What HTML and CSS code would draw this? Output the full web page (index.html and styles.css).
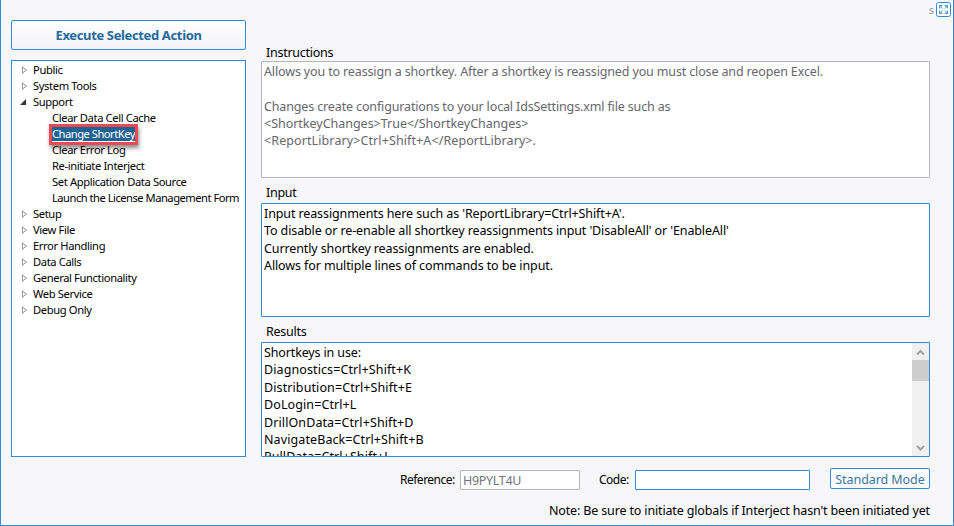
FILE: index.html
```html
<!DOCTYPE html>
<html lang="en">
<head>
<meta charset="utf-8">
<title>System Actions</title>
<link rel="stylesheet" href="styles.css">
</head>
<body>
<div class="window">
  <div class="corner">
    <span>s</span>
    <svg class="expand" viewBox="0 0 15 15">
      <rect x=".5" y=".5" width="14" height="14" rx="2" fill="#fff" stroke="#2f8bd8"/>
      <path d="M3 3h4L3 7zM12 3v4L8 3zM3 12V8L7 12zM12 12H8L12 8z" fill="#5b9fd0"/>
      <path d="M4 4l2.500 2.500M11 4L8.500 6.500M4 11l2.500-2.500M11 11L8.500 8.500" stroke="#7db3da"/>
    </svg>
  </div>
  <aside class="side">
    <button class="execute">Execute Selected Action</button>
    <ul class="tree">
      <li><i class="closed"></i><span>Public</span></li>
      <li><i class="closed"></i><span>System Tools</span></li>
      <li><i class="open"></i><span>Support</span></li>
      <li class="child"><span>Clear Data Cell Cache</span></li>
      <li class="child"><span class="selected">Change ShortKey</span></li>
      <li class="child"><span>Clear Error Log</span></li>
      <li class="child"><span>Re-initiate Interject</span></li>
      <li class="child"><span>Set Application Data Source</span></li>
      <li class="child long"><span>Launch the License Management Form</span></li>
      <li><i class="closed"></i><span>Setup</span></li>
      <li><i class="closed"></i><span>View File</span></li>
      <li><i class="closed"></i><span>Error Handling</span></li>
      <li><i class="closed"></i><span>Data Calls</span></li>
      <li><i class="closed"></i><span>General Functionality</span></li>
      <li><i class="closed"></i><span>Web Service</span></li>
      <li><i class="closed"></i><span>Debug Only</span></li>
    </ul>
  </aside>
  <main class="main">
    <h2>Instructions</h2>
    <div class="box instructions">Allows you to reassign a shortkey. After a shortkey is reassigned you must close and reopen Excel.

Changes create configurations to your local IdsSettings.xml file such as
<span class="tag">&lt;ShortkeyChanges&gt;True&lt;/ShortkeyChanges&gt;</span>
<span class="keys">&lt;ReportLibrary&gt;Ctrl+Shift+A&lt;/ReportLibrary&gt;.</span></div>
    <h2>Input</h2>
    <div class="box input">Input reassignments here such as 'ReportLibrary=Ctrl+Shift+A'.
To disable or re-enable all shortkey reassignments input 'DisableAll' or 'EnableAll'
Currently shortkey reassignments are enabled.
Allows for multiple lines of commands to be input.</div>
    <h2>Results</h2>
    <div class="box results">
      <div class="lines">Shortkeys in use:
<span class="keys">Diagnostics=Ctrl+Shift+K
Distribution=Ctrl+Shift+E
DoLogin=Ctrl+L
DrillOnData=Ctrl+Shift+D
NavigateBack=Ctrl+Shift+B
PullData=Ctrl+Shift+J</span></div>
      <div class="scrollbar">
        <svg viewBox="0 0 17 17"><path d="M5 11.500L8.500 8l3.500 3.500" /></svg>
        <div class="thumb"></div>
        <svg class="down" viewBox="0 0 17 17"><path d="M5 7L8.500 10.500 12 7" /></svg>
      </div>
    </div>
    <div class="fields">
      <label class="ref-label">Reference:</label><div class="field ref">H9PYLT4U</div>
      <label class="code-label">Code:</label><div class="field code"></div>
      <button class="mode">Standard Mode</button>
    </div>
    <p class="note">Note: Be sure to initiate globals if Interject hasn't been initiated yet</p>
  </main>
</div>
</body>
</html>
```
FILE: styles.css
```css
* { box-sizing: border-box; }
body {
  margin: 0;
  font-family: "Noto Sans", "Open Sans", sans-serif;
  font-size: 12.5px;
  letter-spacing: -0.14px;
  color: #000;
}
.window {
  position: relative;
  display: flex;
  gap: 15px;
  width: 954px;
  height: 526px;
  padding: 0 23px 0 10px;
  background: #f7f7fa;
  border: solid #338bd8;
  border-width: 0 1px 1px;
}
.corner {
  position: absolute;
  top: 2px;
  right: 2px;
  display: flex;
  gap: 2px;
  color: #9a9a9a;
  font-size: 11px;
  line-height: 15px;
}
.expand { width: 15px; height: 15px; }
.side { width: 235px; padding-top: 20px; }
button {
  display: block;
  padding: 0;
  font-family: inherit;
  color: #24699b;
  border: 1px solid #338bd8;
  border-radius: 2px;
}
.execute {
  width: 235px;
  height: 30px;
  font-size: 13px;
  font-weight: 700;
  letter-spacing: -0.36px;
  background: linear-gradient(#fff, #f3f3f7);
}
.tree {
  height: 397px;
  margin: 10px 0 0;
  padding: 1px 0 0 9px;
  list-style: none;
  background: #fff;
  border: 1px solid #338bd8;
  font-size: 11.2px;
  line-height: 16px;
  letter-spacing: -0.38px;
}
.tree li { display: flex; height: 16px; white-space: nowrap; }
.tree i { width: 12px; height: 16px; }
.tree i::before { content: ""; display: block; }
.closed::before {
  width: 5px;
  height: 8px;
  margin: 4px 0 0 1px;
  background: #999;
  clip-path: polygon(0 0, 100% 50%, 0 100%, 0 0, 1px 2px, 1px 6px, 3.500px 4px, 1px 2px);
}
.open::before {
  width: 6px;
  height: 6px;
  margin: 5px 0 0 -1px;
  background: #333;
  clip-path: polygon(100% 0, 100% 100%, 0 100%);
}
.tree .child { padding-left: 31px; }
.tree .long { letter-spacing: -0.51px; }
.selected {
  position: relative;
  height: 15px;
  color: #fff;
  background: #1f6396;
  letter-spacing: -0.5px;
}
.selected::after {
  content: "";
  position: absolute;
  inset: -2px -3px -4px;
  border: 3px solid #ee4850;
  box-shadow: 1px 3px 4px rgba(0, 0, 0, .45);
}
.main { width: 669px; padding-top: 44px; }
h2 {
  height: 17px;
  margin: 0;
  padding-left: 5px;
  font-size: 12.5px;
  font-weight: 400;
  line-height: 17px;
  letter-spacing: -0.26px;
}
.box {
  padding: 1px 0 0 2px;
  overflow: hidden;
  background: #fff;
  border: 1px solid #338bd8;
  border-radius: 1px;
  line-height: 17.300px;
  white-space: pre;
}
.keys { letter-spacing: 0.1px; }
.tag { letter-spacing: -0.02px; }
.instructions { height: 117px; margin-bottom: 6px; color: #66666d; border-color: #b4b6bd; }
.input { height: 114px; margin: 2px 0 6px; letter-spacing: -0.11px; }
.results { display: flex; height: 115px; margin-top: 2px; padding-top: 0; }
.lines { flex: 1; height: 113px; padding-top: 1px; overflow: hidden; line-height: 17.400px; }
.scrollbar { display: flex; flex-direction: column; width: 17px; height: 113px; background: #f0f0f0; }
.scrollbar svg { width: 17px; height: 17px; fill: none; stroke: #a2a2a2; stroke-width: 2; }
.thumb { height: 21px; background: #cdcdcd; }
.down { margin-top: auto; }
.fields { display: flex; height: 21px; margin-top: 11px; padding-left: 139px; line-height: 23px; }
.fields label { font-size: 12px; letter-spacing: -0.5px; }
.ref-label { width: 60px; }
.code-label { width: 36px; margin-left: 19px; }
.field {
  height: 20px;
  margin-top: 2px;
  padding-left: 2px;
  background: #fff;
  border: 1px solid #338bd8;
  border-radius: 1px;
  line-height: 19px;
}
.ref { width: 120px; color: #70737e; border-color: #b4b6bd; letter-spacing: -0.3px; }
.code { width: 175px; }
.mode {
  width: 100px;
  height: 21px;
  margin-left: 20px;
  padding-top: 1px;
  font-size: 12.5px;
  line-height: 19px;
  letter-spacing: -0.07px;
  color: #39779f;
  background: #fbfbfd;
}
.note { margin: 13px 0 0; line-height: 17px; letter-spacing: -0.15px; text-align: right; white-space: nowrap; }
```
